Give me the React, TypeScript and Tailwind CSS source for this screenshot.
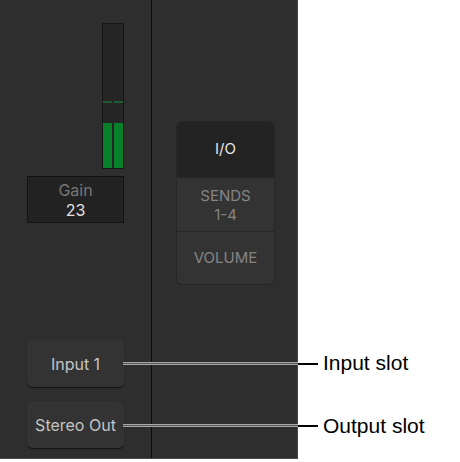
import React from 'react';

const ui = { fontFamily: 'Inter, "Liberation Sans", sans-serif' };
const label = { fontFamily: '"Liberation Sans", Arial, sans-serif' };

const SlotButton: React.FC<{ text: string }> = ({ text }) => (
    <div className="w-[97px] h-[47px] rounded-[5px] bg-[#333333] shadow-[0_1px_1px_rgba(0,0,0,0.6)] flex items-center justify-center text-[16px] text-[#c4c4c4]">
        {text}
    </div>
);

const Meter: React.FC = () => (
    <div className="w-[22px] h-[146px] bg-[#252525] border border-[#151515] flex gap-[2px] relative">
        {[0, 1].map((i) => (
            <div key={i} className="flex-1 flex flex-col">
                <div className="h-[77px]" />
                <div className="h-[2px] bg-[#1f5a30]" />
                <div className="h-[20px]" />
                <div className="flex-1 bg-[#07802a]" />
            </div>
        ))}
    </div>
);

export default function App() {
    return (
        <div className="w-[460px] h-[462px] bg-white relative overflow-hidden" style={ui}>
            <div className="w-[298px] h-[459px] bg-[#2e2e2e] flex border-r border-b border-[#4a4a4a]">
                {/* left strip */}
                <div className="w-[151px] flex flex-col pl-[27px] pt-[23px]">
                    <div className="w-[97px] flex justify-end">
                        <Meter />
                    </div>
                    <div className="mt-[7px] w-[97px] h-[47px] bg-[#222222] border border-[#131313] flex flex-col items-center justify-center leading-[20px]">
                        <span className="text-[16px] text-[#767676]">Gain</span>
                        <span className="text-[16px] text-[#e2e2e2]">23</span>
                    </div>
                    <div className="mt-[117px] flex flex-col gap-[14px]">
                        <SlotButton text="Input 1" />
                        <SlotButton text="Stereo Out" />
                    </div>
                </div>
                <div className="w-[1px] bg-[#0c0c0c]" />
                {/* right strip */}
                <div className="flex-1 pl-[25px] pt-[122px]">
                    <div className="w-[97px] h-[162px] rounded-[5px] overflow-hidden flex flex-col bg-[#333333] shadow-[0_0_0_1px_#262626]">
                        <div className="h-[55px] bg-[#232323] flex items-center justify-center text-[15px] text-[#e6e6e6]">I/O</div>
                        <div className="h-[54px] border-t border-[#262626] flex flex-col items-center justify-center text-[15px] leading-[19px] text-[#858585]">
                            <span>SENDS</span>
                            <span>1-4</span>
                        </div>
                        <div className="flex-1 border-t border-[#262626] flex items-center justify-center text-[15px] text-[#858585]">VOLUME</div>
                    </div>
                </div>
            </div>

            {/* callout lines */}
            <div className="absolute left-[123px] top-[362px] w-[175px] h-[3px] bg-[#a8a8a8] border-y border-[#a8a8a8]">
                <div className="h-[1px] bg-[#555555]" />
            </div>
            <div className="absolute left-[298px] top-[363px] w-[20px] h-[1.5px] bg-black" />
            <div className="absolute left-[123px] top-[424px] w-[175px] h-[3px] bg-[#a8a8a8] border-y border-[#a8a8a8]">
                <div className="h-[1px] bg-[#555555]" />
            </div>
            <div className="absolute left-[298px] top-[425px] w-[20px] h-[1.5px] bg-black" />

            <div className="absolute left-[323px] top-[350px] text-[21px] text-black leading-[26px]" style={label}>Input slot</div>
            <div className="absolute left-[323px] top-[413px] text-[21px] text-black leading-[26px]" style={label}>Output slot</div>
        </div>
    );
}
